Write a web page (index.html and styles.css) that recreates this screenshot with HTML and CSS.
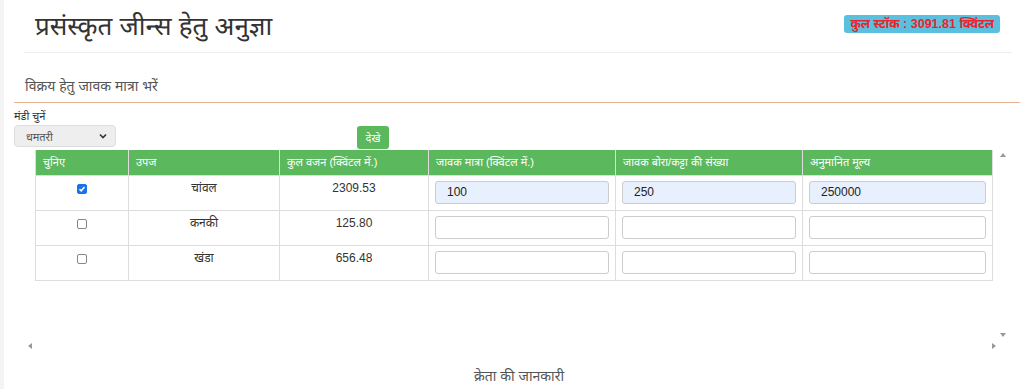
FILE: index.html
```html
<!DOCTYPE html>
<html lang="hi">
<head>
<meta charset="utf-8">
<link rel="stylesheet" href="styles.css">
</head>
<body>
<div class="page">
  <header class="head">
    <h1 class="title">प्रसंस्कृत जीन्स हेतु अनुज्ञा</h1>
    <span class="badge">कुल स्टॉक : 3091.81 क्विंटल</span>
  </header>
  <div class="section">
    <div class="section-title">विक्रय हेतु जावक मात्रा भरें</div>
  </div>
  <div class="form">
    <div class="label">मंडी चुनें</div>
    <div class="form-row">
      <div class="select"><span>धमतरी</span>
        <svg width="8" height="6" viewBox="0 0 8 6"><path d="M1 1.5 L4 4.5 L7 1.5" fill="none" stroke="#333" stroke-width="1.6"/></svg>
      </div>
      <button class="btn">देखे</button>
    </div>
  </div>
  <div class="frame">
    <div class="frame-main">
      <div class="frame-content">
        <table class="grid">
          <colgroup>
            <col style="width:93px"><col style="width:151px"><col style="width:149px"><col style="width:187px"><col style="width:187px"><col style="width:190px">
          </colgroup>
          <thead>
            <tr><th>चुनिए</th><th>उपज</th><th>कुल वजन (क्विंटल में.)</th><th>जावक मात्रा (क्विंटल में.)</th><th>जावक बोरा/कट्टा की संख्या</th><th>अनुमानित मूल्य</th></tr>
          </thead>
          <tbody>
            <tr>
              <td class="c"><span class="chk on"><svg width="8" height="8" viewBox="0 0 8 8"><path d="M1.5 4.2 L3.2 5.8 L6.5 2" fill="none" stroke="#fff" stroke-width="1.5"/></svg></span></td>
              <td class="c">चांवल</td>
              <td class="c">2309.53</td>
              <td><div class="inp fill">100</div></td>
              <td><div class="inp fill">250</div></td>
              <td><div class="inp fill">250000</div></td>
            </tr>
            <tr>
              <td class="c"><span class="chk"></span></td>
              <td class="c">कनकी</td>
              <td class="c">125.80</td>
              <td><div class="inp"></div></td>
              <td><div class="inp"></div></td>
              <td><div class="inp"></div></td>
            </tr>
            <tr>
              <td class="c"><span class="chk"></span></td>
              <td class="c">खंडा</td>
              <td class="c">656.48</td>
              <td><div class="inp"></div></td>
              <td><div class="inp"></div></td>
              <td><div class="inp"></div></td>
            </tr>
          </tbody>
        </table>
      </div>
      <div class="vbar">
        <span class="arr up"></span>
        <span class="arr down"></span>
      </div>
    </div>
    <div class="hbar">
      <span class="arr left"></span>
      <span class="htrack"></span>
      <span class="arr right"></span>
    </div>
  </div>
  <div class="buyer">क्रेता की जानकारी</div>
</div>
</body>
</html>
```

FILE: styles.css
```css
* { box-sizing: border-box; }
html, body { margin: 0; padding: 0; background: #fff; }
body {
  font-family: "Liberation Sans", "Noto Sans", Arial, sans-serif;
  color: #333;
  width: 1024px;
  height: 389px;
  overflow: hidden;
}
.page {
  border-left: 4px solid #f4f4f4;
  height: 389px;
}
.head {
  display: flex;
  justify-content: space-between;
  align-items: flex-start;
  margin: 0 12px 0 20px;
  height: 53px;
  border-bottom: 1px solid #eee;
}
.title {
  margin: 9px 0 0 11px;
  font-size: 26px;
  font-weight: normal;
  line-height: 34px;
  color: #333;
}
.badge {
  margin: 15px 12px 0 0;
  background: #5bc0de;
  color: #e8252b;
  font-weight: bold;
  font-size: 12.5px;
  line-height: 18px;
  height: 18px;
  padding: 0 6px;
  border-radius: 3px;
}
.section {
  margin: 0 4px 0 10px;
  border-bottom: 1px solid #e9b396;
  height: 50px;
}
.section-title {
  padding: 24px 0 0 11px;
  font-size: 14px;
  line-height: 18px;
  color: #555;
}
.form {
  margin-left: 10px;
}
.label {
  font-size: 11px;
  line-height: 14px;
  margin-top: 6px;
  color: #333;
}
.form-row {
  display: flex;
  align-items: flex-start;
  margin-top: 2px;
  height: 23px;
}
.select {
  width: 102px;
  height: 22px;
  background: #eee;
  border: 1px solid #ddd;
  border-radius: 4px;
  display: flex;
  align-items: center;
  justify-content: space-between;
  padding: 0 8px 0 11px;
  font-size: 11px;
  color: #555;
}
.btn {
  margin-left: 241px;
  margin-top: 1px;
  width: 32px;
  height: 23px;
  background: #5cb85c;
  color: #fff;
  border: 0;
  border-radius: 3px;
  font-family: inherit;
  font-size: 11px;
  padding: 0;
}
.frame {
  margin: 0 14px 0 21px;
  height: 204px;
  display: flex;
  flex-direction: column;
}
.frame-main {
  display: flex;
  flex: 1;
}
.frame-content {
  flex: 1;
  padding: 2px 0 0 10px;
}
.vbar {
  width: 14px;
  display: flex;
  flex-direction: column;
  justify-content: space-between;
  align-items: center;
  padding: 5px 0 3px;
}
.hbar {
  height: 12px;
  display: flex;
  align-items: center;
  padding: 0 14px 0 3px;
}
.htrack { flex: 1; }
.arr { width: 0; height: 0; border: 3px solid transparent; }
.arr.up { border-bottom: 4px solid #999; border-top: 0; }
.arr.down { border-top: 4px solid #999; border-bottom: 0; }
.arr.left { border-right: 4px solid #999; border-left: 0; }
.arr.right { border-left: 4px solid #999; border-right: 0; }
.grid {
  border-collapse: collapse;
  table-layout: fixed;
  width: 957px;
  font-size: 11px;
}
.grid th {
  background: #5cb85c;
  color: #fff;
  font-weight: normal;
  text-align: left;
  height: 25px;
  padding: 0 7px;
  border: 1px solid #ddd;
  border-top: 0;
  line-height: 14px;
}
.grid td {
  border: 1px solid #ddd;
  padding: 5px 6px 6px;
  vertical-align: top;
  font-size: 12px;
  line-height: 14px;
  color: #333;
}
.grid td.c {
  text-align: center;
  padding-top: 5px;
}
.chk {
  display: inline-block;
  width: 10px;
  height: 10px;
  border: 1px solid #888;
  border-radius: 2px;
  margin-top: 3px;
  background: #fff;
  vertical-align: top;
}
.chk.on {
  background: #1a73e8;
  border-color: #1a73e8;
  display: inline-flex;
  align-items: center;
  justify-content: center;
}
.inp {
  height: 23px;
  border: 1px solid #ccc;
  border-radius: 3px;
  background: #fff;
  font-size: 12px;
  line-height: 21px;
  padding: 0 11px;
  color: #222;
}
.inp.fill { background: #e8f0fe; }
.buyer {
  text-align: center;
  font-size: 14px;
  line-height: 18px;
  color: #555;
  margin-top: 15px;
  padding-left: 10px;
}
```
